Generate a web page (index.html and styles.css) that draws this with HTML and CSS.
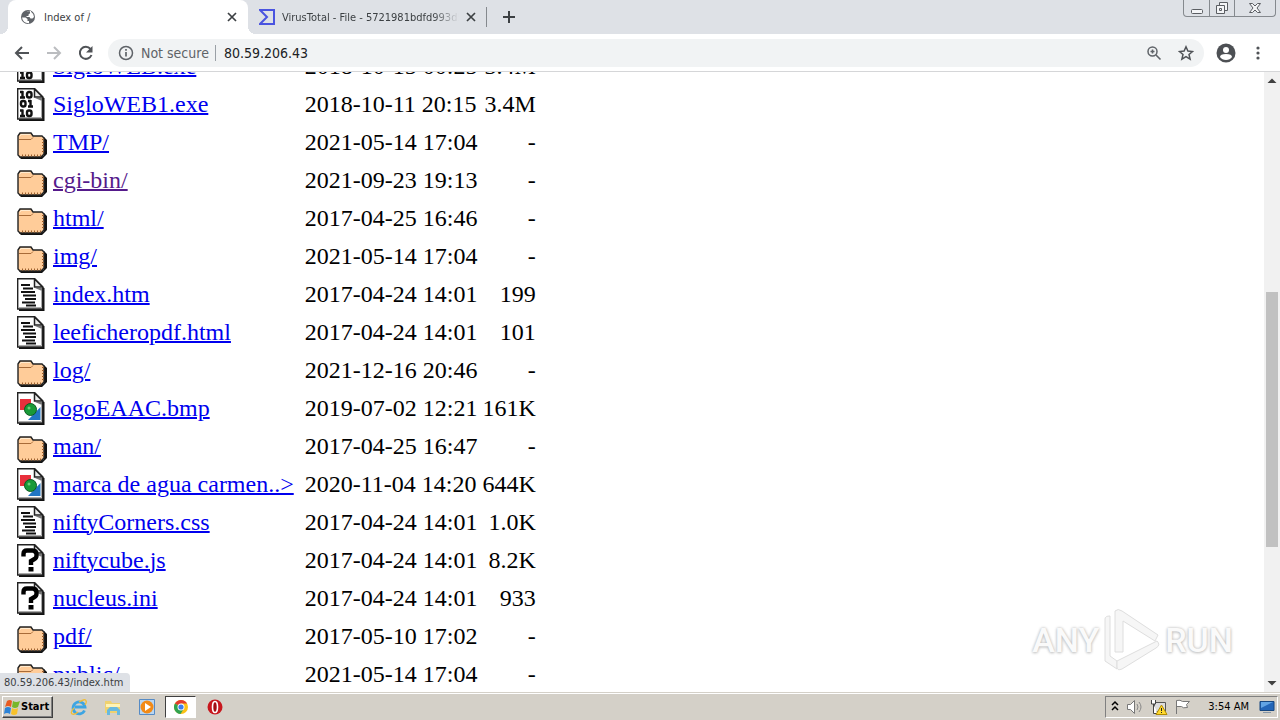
FILE: index.html
```html
<!DOCTYPE html>
<html lang="en">
<head>
    <meta charset="UTF-8">
    <meta name="viewport" content="width=device-width, initial-scale=1.0">
    <title>Index of /</title>
    <link rel="stylesheet" href="styles.css">
</head>
<body>
    <!-- file type icons -->
    <svg class="defs" aria-hidden="true">
        <symbol id="page" viewBox="0 0 30 33">
            <path d="M2 32h24.500V10" fill="none" stroke="#111" stroke-width="2"/>
            <path d="M.7.7h17l8 8v22.300H.7z" fill="#fff" stroke="#222" stroke-width="1.400"/>
            <path d="M17.500 1v8h8z" fill="#eee" stroke="#222" stroke-width="1.500"/>
            <path d="M18 10h7v3z" fill="#777"/>
            <path d="M24.500 13v16.500H2" fill="none" stroke="#aaa"/>
        </symbol>
        <symbol id="text" viewBox="0 0 30 33">
            <use href="#page"/>
            <path d="M4 7h9M6 10.500h10M4 14h14M6 17.500h13M8 21h11M5 24.500h13M9 27.500h10" stroke="#111" stroke-width="1.800"/>
        </symbol>
        <symbol id="binary" viewBox="0 0 30 33">
            <use href="#page"/>
            <g fill="none" stroke="#111" stroke-width="2.400">
                <path d="M5.500 3v7M3 4h3M3 9.500h5M5.500 21.500v7M3 22.500h3M3 28h5M13.500 12v7M11 13h3M11 18.500h5"/>
                <rect x="10" y="4" width="4.500" height="5.500" rx="2"/>
                <rect x="4" y="13" width="4.500" height="5.500" rx="2"/>
                <rect x="10" y="22.500" width="4.500" height="5.500" rx="2"/>
            </g>
        </symbol>
        <symbol id="image" viewBox="0 0 30 33">
            <use href="#page"/>
            <path d="M3 7h11v11H3z" fill="#e8303c"/>
            <path d="M23.500 15v13H11z" fill="#2176c4"/>
            <circle cx="13.500" cy="17.500" r="6" fill="#199a38" stroke="#0b5a22"/>
            <circle cx="12" cy="16" r="1.500" fill="#6fce7c"/>
        </symbol>
        <symbol id="unknown" viewBox="0 0 30 33">
            <use href="#page"/>
            <path d="M6.500 12.500V10q0-3.500 3.500-3.500h5.500q4 0 4 4v1q0 2.500-2 3.500l-3.500 2v4" fill="none" stroke="#000" stroke-width="4.400"/>
            <path d="M11.500 23h5v4.500h-5z"/>
        </symbol>
        <symbol id="folder" viewBox="0 0 30 33">
            <path d="M4 33h21l5-5V14l-3-3v18l-3 2H2z" fill="#111"/>
            <path d="M1 10l2-3h11l2 3h9l2 2v16l-3 3H3l-2-2z" fill="#fc9" stroke="#222" stroke-width="1.400"/>
            <path d="M2 13.500h12l2-2" fill="none" stroke="#a86b38"/>
            <path d="M3 10l1-1.500h9" fill="none" stroke="#ffebd0"/>
            <path d="M5 29.500h20M26 13v15" stroke="#9b5e2d" stroke-width="2" stroke-dasharray="1 2"/>
        </symbol>
    </svg>

    <header class="tabstrip">
        <div class="tab active">
            <svg class="favicon" viewBox="0 0 16 16"><circle cx="8" cy="8" r="7" fill="#5f6368"/><path d="M2 8.500h3.500l2 1.500v2H9v2.200Q3 14.500 2 8.500zM7 2.200h3v2L8.500 5.500V7H6.500v1H9.500l1 1.500h2L14 8q-.2-3.500-3-5.300V2H7z" fill="#fff"/></svg>
            <span class="tab-title">Index of /</span>
            <button class="icon-button" aria-label="Close tab"><svg width="10" height="10" viewBox="0 0 10 10"><path d="M1 1l8 8M9 1L1 9" stroke="#3c4043" stroke-width="1.700"/></svg></button>
        </div>
        <div class="tab">
            <svg class="favicon" viewBox="0 0 16 16"><path d="M1 1h14v14H1l7-7z" fill="none" stroke="#4a54e0" stroke-width="2"/></svg>
            <span class="tab-title fade">VirusTotal - File - 5721981bdfd993d5</span>
            <button class="icon-button" aria-label="Close tab"><svg width="10" height="10" viewBox="0 0 10 10"><path d="M1 1l8 8M9 1L1 9" stroke="#3c4043" stroke-width="1.700"/></svg></button>
        </div>
        <button class="icon-button new-tab" aria-label="New tab"><svg width="12" height="12" viewBox="0 0 12 12"><path d="M6 0v12M0 6h12" stroke="#3c4043" stroke-width="2"/></svg></button>
        <div class="window-buttons">
            <button aria-label="Minimize"><svg width="14" height="14" viewBox="0 0 14 14"><rect x="1.500" y="8.500" width="11" height="4" rx="1"/></svg></button>
            <button aria-label="Restore"><svg width="14" height="14" viewBox="0 0 14 14"><path d="M4.500 4V1.500h8v8H10M1.500 4.500h8v8h-8zM4.500 7.500h2v2h-2z"/></svg></button>
            <button class="wide" aria-label="Close"><svg width="14" height="14" viewBox="0 0 14 14"><path d="M1.500 2.500h3L7 5l2.500-2.500h3L9 7l3.500 4.500h-3L7 9l-2.500 2.500h-3L5 7z"/></svg></button>
        </div>
    </header>

    <nav class="toolbar">
        <button class="icon-button" aria-label="Back"><svg width="16" height="16" viewBox="0 0 16 16"><path d="M15 8H2M8 2L2 8l6 6" fill="none" stroke="#505357" stroke-width="2"/></svg></button>
        <button class="icon-button" aria-label="Forward"><svg width="16" height="16" viewBox="0 0 16 16"><path d="M1 8h13M8 2l6 6-6 6" fill="none" stroke="#bbbdc0" stroke-width="2"/></svg></button>
        <button class="icon-button" aria-label="Reload"><svg width="16" height="16" viewBox="0 0 16 16"><path d="M13.500 10A6 6 0 1 1 12.500 4" fill="none" stroke="#505357" stroke-width="2"/><path d="M14.500 1v6.500H8z" fill="#505357"/></svg></button>
        <div class="omnibox">
            <svg width="16" height="16" viewBox="0 0 16 16"><circle cx="8" cy="8" r="6.500" fill="none" stroke="#5f6368" stroke-width="1.500"/><path d="M8 7v4.500M8 4v1.700" stroke="#5f6368" stroke-width="1.700"/></svg>
            <label class="not-secure" for="address">Not secure</label>
            <input id="address" type="text" value="80.59.206.43">
            <button class="icon-button" aria-label="Zoom"><svg width="16" height="16" viewBox="0 0 16 16"><circle cx="6.500" cy="6.500" r="4.500" fill="none" stroke="#5f6368" stroke-width="1.500"/><path d="M10 10l4.500 4.500M4.500 6.500h4M6.500 4.500v4" stroke="#5f6368" stroke-width="1.600"/></svg></button>
            <button class="icon-button" aria-label="Bookmark"><svg width="16" height="16" viewBox="0 0 16 16"><path d="M8 1.800l1.900 4.300 4.600.4L11 9.500l1.100 4.600L8 11.700l-4.100 2.400L5 9.500 1.500 6.500l4.600-.4z" fill="none" stroke="#505357" stroke-width="1.500"/></svg></button>
        </div>
        <button class="icon-button" aria-label="Profile"><svg width="20" height="20" viewBox="0 0 20 20"><circle cx="10" cy="10" r="9.500" fill="#4d5054"/><circle cx="10" cy="7" r="3" fill="#fff"/><path d="M4 14q0-3 6-3t6 3q-2 3-6 3t-6-3z" fill="#fff"/></svg></button>
        <button class="icon-button" aria-label="Menu"><svg width="16" height="16" viewBox="0 0 16 16" fill="#505357"><circle cx="8" cy="3" r="1.600"/><circle cx="8" cy="8" r="1.600"/><circle cx="8" cy="13" r="1.600"/></svg></button>
    </nav>

    <main class="viewport">
        <div class="listing">
            <table>
                <tr><td><svg class="type"><use href="#binary"/></svg></td><td><a href="#">SigloWEB.exe</a></td><td>2018-10-15 00:25</td><td>3.4M</td></tr>
                <tr><td><svg class="type"><use href="#binary"/></svg></td><td><a href="#">SigloWEB1.exe</a></td><td>2018-10-11 20:15</td><td>3.4M</td></tr>
                <tr><td><svg class="type"><use href="#folder"/></svg></td><td><a href="#">TMP/</a></td><td>2021-05-14 17:04</td><td>-</td></tr>
                <tr><td><svg class="type"><use href="#folder"/></svg></td><td><a class="visited" href="#">cgi-bin/</a></td><td>2021-09-23 19:13</td><td>-</td></tr>
                <tr><td><svg class="type"><use href="#folder"/></svg></td><td><a href="#">html/</a></td><td>2017-04-25 16:46</td><td>-</td></tr>
                <tr><td><svg class="type"><use href="#folder"/></svg></td><td><a href="#">img/</a></td><td>2021-05-14 17:04</td><td>-</td></tr>
                <tr><td><svg class="type"><use href="#text"/></svg></td><td><a href="#">index.htm</a></td><td>2017-04-24 14:01</td><td>199</td></tr>
                <tr><td><svg class="type"><use href="#text"/></svg></td><td><a href="#">leeficheropdf.html</a></td><td>2017-04-24 14:01</td><td>101</td></tr>
                <tr><td><svg class="type"><use href="#folder"/></svg></td><td><a href="#">log/</a></td><td>2021-12-16 20:46</td><td>-</td></tr>
                <tr><td><svg class="type"><use href="#image"/></svg></td><td><a href="#">logoEAAC.bmp</a></td><td>2019-07-02 12:21</td><td>161K</td></tr>
                <tr><td><svg class="type"><use href="#folder"/></svg></td><td><a href="#">man/</a></td><td>2017-04-25 16:47</td><td>-</td></tr>
                <tr><td><svg class="type"><use href="#image"/></svg></td><td><a href="#">marca de agua carmen..&gt;</a></td><td>2020-11-04 14:20</td><td>644K</td></tr>
                <tr><td><svg class="type"><use href="#text"/></svg></td><td><a href="#">niftyCorners.css</a></td><td>2017-04-24 14:01</td><td>1.0K</td></tr>
                <tr><td><svg class="type"><use href="#unknown"/></svg></td><td><a href="#">niftycube.js</a></td><td>2017-04-24 14:01</td><td>8.2K</td></tr>
                <tr><td><svg class="type"><use href="#unknown"/></svg></td><td><a href="#">nucleus.ini</a></td><td>2017-04-24 14:01</td><td>933</td></tr>
                <tr><td><svg class="type"><use href="#folder"/></svg></td><td><a href="#">pdf/</a></td><td>2017-05-10 17:02</td><td>-</td></tr>
                <tr><td><svg class="type"><use href="#folder"/></svg></td><td><a href="#">public/</a></td><td>2021-05-14 17:04</td><td>-</td></tr>
            </table>
        </div>
        <div class="scrollbar">
            <svg class="arrow" viewBox="0 0 15 17"><path d="M3 11h9L7.500 6.500z" fill="#404040"/></svg>
            <div class="track"><div class="thumb"></div></div>
            <svg class="arrow" viewBox="0 0 15 17"><path d="M3 6h9l-4.500 4.500z" fill="#404040"/></svg>
        </div>
        <div class="watermark">
            <span>ANY</span>
            <svg width="58" height="64" viewBox="0 0 58 64"><g fill="#f6f6f6" stroke="#dedede" stroke-linejoin="round"><path d="M2 11q0-3 5-3v40l7 5v8L2 53z"/><path d="M12 3q3-3 7 0l36 24-3 6-32-20v31h-8z"/><path d="M14 53l40-20q4 4-1 7L19 61q-5 2-5-2z"/></g></svg>
            <span>RUN</span>
        </div>
        <div class="status">80.59.206.43/index.htm</div>
    </main>

    <footer class="taskbar">
        <button class="start"><svg width="16" height="16" viewBox="0 0 16 16"><path d="M3 2q3-2 5 0L7 8Q4 6 1 8z" fill="#e85b22"/><path d="M9 2q3 2 7 0l-2 6q-3 2-6 0z" fill="#78b72b"/><path d="M1 9q3-2 6 0l-1 6q-3-2-6 0z" fill="#2d83d6"/><path d="M8 9q3 2 6 0l-1 6q-3 2-6 0z" fill="#f8c22b"/></svg>Start</button>
        <button class="task" aria-label="Internet Explorer"><svg width="18" height="18" viewBox="0 0 18 18"><path d="M14.500 12.500A6 6 0 1 1 15 9H5" fill="none" stroke="#3da5e3" stroke-width="2.800"/><path d="M2 16q-2-2 2-6M2 16q3 1 6-2M9 4q7-4 7-1 1 1-1 4" fill="none" stroke="#efbd38" stroke-width="1.300"/></svg></button>
        <button class="task" aria-label="Explorer"><svg width="18" height="18" viewBox="0 0 18 18"><path d="M1 3h6l1 2h8v10H1z" fill="#efd16f"/><path d="M2 6h14v3H2z" fill="#fff3b5"/><path d="M3 17v-5l3-3h7l3 3v5h-3v-4H6v4z" fill="#68b9df"/></svg></button>
        <button class="task" aria-label="Media Player"><svg width="18" height="18" viewBox="0 0 18 18"><path d="M1.500 1.500h15v15h-15z" fill="#b9d6f2" stroke="#568bc5"/><circle cx="9" cy="9" r="6.500" fill="#f28a16"/><path d="M7 5l6 4-6 4z" fill="#fff"/></svg></button>
        <button class="task pressed" aria-label="Chrome"><svg width="16" height="16" viewBox="0 0 16 16"><circle cx="8" cy="8" r="7" fill="#fbc116"/><path d="M8 8L1.900 4.500a7 7 0 0 1 12.200 0H8z" fill="#e33b2e"/><path d="M8 8L1.900 4.500A7 7 0 0 0 7.500 15L11 9.500z" fill="#31a350"/><circle cx="8" cy="8" r="3.500" fill="#fff"/><circle cx="8" cy="8" r="2.600" fill="#3b7ded"/></svg></button>
        <button class="task" aria-label="Opera"><svg width="18" height="18" viewBox="0 0 18 18"><circle cx="9" cy="9" r="7.500" fill="#c8171e"/><ellipse cx="9" cy="9" rx="2.500" ry="5.500" fill="#a30e14" stroke="#fff" stroke-width="1.600"/></svg></button>
        <div class="tray">
            <svg width="10" height="14" viewBox="0 0 10 14"><path d="M2 5l3-3 3 3M2 10l3-3 3 3" fill="none" stroke="#000" stroke-width="1.500"/></svg>
            <svg width="18" height="16" viewBox="0 0 18 16"><path d="M1.500 5.500h3l4-4v13l-4-4h-3z" fill="#fff" stroke="#777"/><path d="M11 5q2 3 0 6M13 3q4 5 0 10" fill="none" stroke="#888"/></svg>
            <svg width="18" height="16" viewBox="0 0 18 16"><path d="M4.500 3.500h11v9h-11z" fill="#ddd" stroke="#555"/><path d="M1.500 1v4h4V1M3.500 5v9.500h4" fill="#fff" stroke="#444"/><path d="M11.500 6l5.500 9.500H6z" fill="#ffd92e" stroke="#b28b00"/><path d="M11.500 9v3M11.500 13v1" stroke="#222"/></svg>
            <svg width="18" height="16" viewBox="0 0 18 16"><path d="M2.500 15V1.500q4-1 6 1h7l-3 3 1 3q-5 1-6-1h-5" fill="#fff" stroke="#777"/></svg>
            <span class="clock">3:54 AM</span>
            <svg width="16" height="14" viewBox="0 0 16 14"><path d="M1 1.500h14v9H1z" fill="#2466b8" stroke="#174780"/><path d="M2 2h12L2 8z" fill="#62a4e4"/><path d="M4 12h8v1H4z" fill="#8796a6"/></svg>
        </div>
    </footer>
</body>
</html>
```
FILE: styles.css
```css
* {
    box-sizing: border-box;
}

body {
    margin: 0;
    height: 100vh;
    display: flex;
    flex-direction: column;
    overflow: hidden;
    background-color: #fff;
    font-family: "DejaVu Sans Condensed", "DejaVu Sans", sans-serif;
    font-size: 11px;
    color: #3c4043;
}

button {
    padding: 0;
    border: none;
    background: none;
    font: inherit;
}

svg {
    display: block;
    flex-shrink: 0;
}

.defs {
    position: absolute;
    width: 0;
    height: 0;
}

.icon-button {
    display: flex;
    align-items: center;
    justify-content: center;
    min-width: 16px;
    height: 20px;
}

/* tabs */
.tabstrip {
    display: flex;
    height: 34px;
    padding-left: 8px;
    background-color: #dee1e6;
}

.tab {
    display: flex;
    align-items: center;
    width: 240px;
    padding: 0 8px 0 12px;
}

.tab + .tab {
    position: relative;
    width: 239px;
    padding-left: 11px;
}

.tab + .tab::after {
    content: "";
    position: absolute;
    right: 0;
    top: 7px;
    height: 20px;
    border-right: 1px solid #85898e;
}

/* white strip under the rounded neighbours */
.tab.active {
    position: relative;
    background-color: #fff;
    border-radius: 8px 8px 0 0;
}

.tab.active::before,
.tab.active::after {
    content: "";
    position: absolute;
    bottom: 0;
    width: 8px;
    height: 8px;
}

.tab.active::before {
    left: -8px;
    background: radial-gradient(circle at 0 0, #dee1e6 8px, #fff 8px);
}

.tab.active::after {
    right: -8px;
    background: radial-gradient(circle at 100% 0, #dee1e6 8px, #fff 8px);
}

.favicon {
    width: 16px;
    height: 16px;
}

.tab-title {
    flex: 1;
    margin: 0 4px 0 8px;
    overflow: hidden;
    white-space: nowrap;
}

.fade {
    margin-left: 7px;
    -webkit-mask-image: linear-gradient(to right, #000 85%, transparent);
    mask-image: linear-gradient(to right, #000 85%, transparent);
}

.new-tab {
    width: 44px;
    height: 34px;
}

.window-buttons {
    display: flex;
    height: 17px;
    margin-left: auto;
    margin-right: 4px;
    border: 1px solid #85898e;
    border-top: none;
    border-radius: 0 0 4px 4px;
}

.window-buttons button {
    display: flex;
    align-items: center;
    justify-content: center;
    width: 25px;
}

.window-buttons button + button {
    border-left: 1px solid #85898e;
}

.window-buttons .wide {
    width: 41px;
}

.window-buttons svg {
    fill: #f4f5f7;
    stroke: #5b5e63;
}

/* toolbar */
.toolbar {
    display: flex;
    align-items: center;
    gap: 16px;
    height: 38px;
    padding: 0 14px;
    border-bottom: 1px solid #d5d6d8;
}

.toolbar > .icon-button:last-child {
    margin-left: -2px;
}

.omnibox {
    flex: 1;
    display: flex;
    align-items: center;
    height: 28px;
    margin-right: -4px;
    margin-left: -2px;
    padding: 0 10px;
    border-radius: 14px;
    background-color: #f1f3f4;
    font-size: 14px;
}

.omnibox .icon-button + .icon-button {
    margin-left: 16px;
}

.not-secure {
    margin-left: 7px;
    padding-right: 6px;
    border-right: 1px solid #9aa0a6;
    line-height: 16px;
    color: #5f6368;
}

#address {
    flex: 1;
    min-width: 0;
    padding: 0 8px;
    border: none;
    background: none;
    font: inherit;
    color: #202124;
}

/* directory listing */
.viewport {
    position: relative;
    flex: 1;
    display: flex;
    min-height: 0;
}

.listing {
    flex: 1;
    overflow: hidden;
    padding-left: 14px;
    font-family: "Liberation Serif", "Times New Roman", serif;
    font-size: 24px;
    line-height: 28px;
    color: #000;
}

/* scrolled part way down the list */
.listing table {
    margin-top: -26px;
    border-spacing: 2px;
}

.listing td {
    height: 36px;
    padding: 0 1px;
    white-space: nowrap;
}

.listing td:first-child {
    padding-right: 3px;
}

.listing td:nth-child(2) {
    padding-right: 8px;
}

.listing td:last-child {
    padding-left: 2px;
    text-align: right;
}

.listing a {
    color: #0000ee;
    text-decoration-thickness: 2px;
}

.listing a.visited {
    color: #551a8b;
}

.type {
    width: 30px;
    height: 33px;
}

.scrollbar {
    display: flex;
    flex-direction: column;
    width: 16px;
    background-color: #f1f1f1;
}

.arrow {
    width: 16px;
    height: 17px;
}

.track {
    flex: 1;
    display: grid;
    grid-template-rows: 203fr 255fr 128fr;
}

.thumb {
    grid-row: 2;
    margin: 0 2px;
    background-color: #c1c1c1;
}

.watermark {
    position: absolute;
    right: 47px;
    bottom: 20px;
    display: flex;
    align-items: center;
    gap: 4px;
    font-family: Roboto, sans-serif;
    font-size: 34px;
    font-weight: 500;
    color: #fafafa;
    text-shadow: 0 0 3px #bbb, 0 1px 3px #ccc;
}

.status {
    position: absolute;
    left: 0;
    bottom: 0;
    padding: 0 7px 0 4px;
    border-top-right-radius: 4px;
    background-color: #dee1e6;
    line-height: 19px;
}

/* taskbar */
.taskbar {
    display: flex;
    align-items: center;
    height: 28px;
    padding: 2px;
    border-top: 1px solid #d4d0c8;
    box-shadow: inset 0 1px #fff;
    background-color: #d4d0c8;
    color: #000;
}

.start {
    display: flex;
    align-items: center;
    gap: 1px;
    height: 22px;
    margin-right: 9px;
    padding: 0 3px 0 1px;
    border: 1px solid;
    border-color: #fff #404040 #404040 #fff;
    box-shadow: inset -1px -1px #808080;
    font-weight: bold;
}

.task {
    display: flex;
    align-items: center;
    justify-content: center;
    width: 34px;
    height: 22px;
}

.pressed {
    width: 31px;
    margin: 0 2px 0 1px;
    border: 1px solid;
    border-color: #404040 #fff #fff #404040;
    background-color: #fff;
}

.tray {
    display: flex;
    align-items: center;
    gap: 6px;
    height: 22px;
    margin-left: auto;
    padding: 0 2px 0 4px;
    border: 1px solid;
    border-color: #808080 #fff #fff #808080;
}

.clock {
    margin: 0 4px 0 10px;
}
```
